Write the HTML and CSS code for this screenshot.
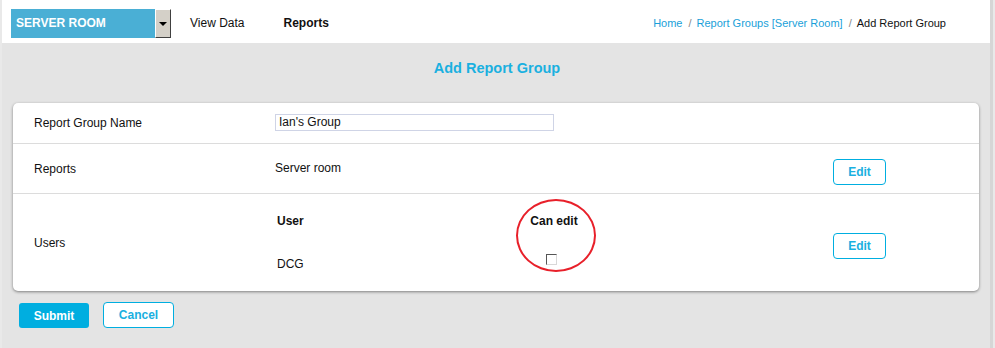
FILE: index.html
```html
<!DOCTYPE html>
<html lang="en">
<head>
  <meta charset="UTF-8" />
  <title>Add Report Group</title>
  <link rel="stylesheet" href="styles.css">
</head>
<body>
  <div class="page">
    <div class="topbar">
      <div class="site-select">
        <span class="site-name">SERVER ROOM</span>
        <span class="site-arrow"></span>
      </div>
      <a class="nav-link">View Data</a>
      <a class="nav-link active">Reports</a>
      <div class="crumbs">
        <a>Home</a><span class="sep">/</span><a>Report Groups [Server Room]</a><span class="sep">/</span><span class="current">Add Report Group</span>
      </div>
    </div>

    <div class="content">
      <h1 class="title">Add Report Group</h1>

      <div class="card">
        <div class="row row-name">
          <div class="label">Report Group Name</div>
          <div class="value"><input class="text-input" type="text" value="Ian's Group"></div>
        </div>
        <div class="row row-reports">
          <div class="label">Reports</div>
          <div class="value">Server room</div>
          <div class="action"><button class="btn-outline">Edit</button></div>
        </div>
        <div class="row row-users">
          <div class="label">Users</div>
          <div class="value">
            <table class="users">
              <tr><th class="col-user">User</th><th class="col-edit">Can edit</th></tr>
              <tr><td class="col-user">DCG</td><td class="col-edit"><span class="checkbox"></span></td></tr>
            </table>
            <span class="circle"></span>
          </div>
          <div class="action"><button class="btn-outline">Edit</button></div>
        </div>
      </div>

      <div class="form-actions">
        <button class="btn-primary">Submit</button>
        <button class="btn-outline btn-cancel">Cancel</button>
      </div>
    </div>
  </div>
</body>
</html>
```

FILE: styles.css
```css
body {
  margin: 0;
  background: #e9e9e9;
  font-family: "Liberation Sans", Arial, sans-serif;
  font-size: 12px;
  color: #111;
}

.page {
  width: 988px;
  height: 348px;
  margin-left: 2px;
  background: #e4e4e4;
  border-right: 3px solid #d6d6d6;
}

.topbar {
  height: 43px;
  background: #fff;
  display: flex;
  align-items: center;
  padding-left: 9px;
}

.site-select {
  display: flex;
  width: 160px;
  height: 29px;
  margin-top: 3px;
}

.site-name {
  flex: 1;
  background: #4aafd5;
  color: #fff;
  font-weight: bold;
  line-height: 29px;
  padding-left: 5px;
}

.site-arrow {
  width: 14px;
  background: #d4d0c8;
  border: 1px solid #fff;
  border-right-color: #404040;
  border-bottom-color: #404040;
  position: relative;
}

.site-arrow::after {
  content: "";
  position: absolute;
  left: 3px;
  top: 12px;
  border-width: 4px 4px 0 4px;
  border-style: solid;
  border-color: #000 transparent transparent transparent;
}

.nav-link {
  margin-left: 19px;
  margin-top: 2px;
  color: #111;
}

.nav-link.active {
  margin-left: 39px;
  font-weight: bold;
}

.crumbs {
  margin-left: auto;
  margin-right: 44px;
  margin-top: 2px;
  font-size: 11px;
}

.crumbs a {
  color: #1a9fd9;
}

.crumbs .sep {
  color: #888;
  margin: 0 5px 0 6px;
}

.crumbs .current {
  color: #111;
}

.content {
  padding: 0 9px 0 11px;
}

.title {
  margin: 0;
  height: 60px;
  line-height: 50px;
  text-align: center;
  font-size: 14.5px;
  color: #1ab0e0;
}

.card {
  background: #fff;
  border-radius: 5px;
  box-shadow: 0 1px 3px rgba(0, 0, 0, 0.45);
  width: 966px;
}

.row {
  display: flex;
  align-items: center;
  padding-left: 21px;
  border-bottom: 1px solid #dcdcdc;
}

.row:last-child {
  border-bottom: none;
}

.row-name { height: 40px; }
.row-reports { height: 49px; }
.row-users { height: 97px; }

.label {
  width: 241px;
}

.value {
  flex: 1;
  position: relative;
}

.row-reports .value {
  margin-top: -2px;
}

.text-input {
  width: 271px;
  height: 13px;
  border: 1px solid #cfd4e6;
  font-family: inherit;
  font-size: 12px;
  padding: 1px 3px;
  margin-top: -2px;
  color: #111;
}

.action {
  width: 53px;
  margin-right: 93px;
}

.row-reports .action { margin-top: 7px; }
.row-users .action { margin-top: 7px; }

.btn-outline {
  width: 53px;
  height: 26px;
  background: #fff;
  border: 1px solid #00aee0;
  border-radius: 4px;
  color: #1ab0e0;
  font-family: inherit;
  font-size: 12px;
  font-weight: bold;
  padding: 0;
}

.users {
  border-collapse: collapse;
  margin-top: -1px;
}

.users th,
.users td {
  padding: 0 0 0 2px;
  text-align: left;
  height: 42px;
  vertical-align: middle;
}

.users th {
  font-weight: bold;
  height: 43px;
}

.users .col-user {
  width: 252px;
}

.users .col-edit {
  width: 50px;
  text-align: center;
  padding-left: 0;
}

.checkbox {
  display: inline-block;
  position: relative;
  top: -3px;
  left: -3px;
  width: 9px;
  height: 9px;
  border: 1px solid #d8d8d8;
  border-top-color: #555;
  border-left-color: #555;
}

.circle {
  position: absolute;
  left: 241px;
  top: -2px;
  width: 76px;
  height: 69px;
  border: 2px solid #e8202a;
  border-radius: 50%;
}

.form-actions {
  display: flex;
  gap: 14px;
  padding: 11px 0 0 6px;
}

.btn-primary {
  width: 70px;
  height: 25px;
  background: #00aee0;
  color: #fff;
  border: none;
  border-radius: 3px;
  font-family: inherit;
  font-size: 12px;
  font-weight: bold;
  margin-top: 1px;
}

.btn-cancel {
  width: 71px;
}
```
